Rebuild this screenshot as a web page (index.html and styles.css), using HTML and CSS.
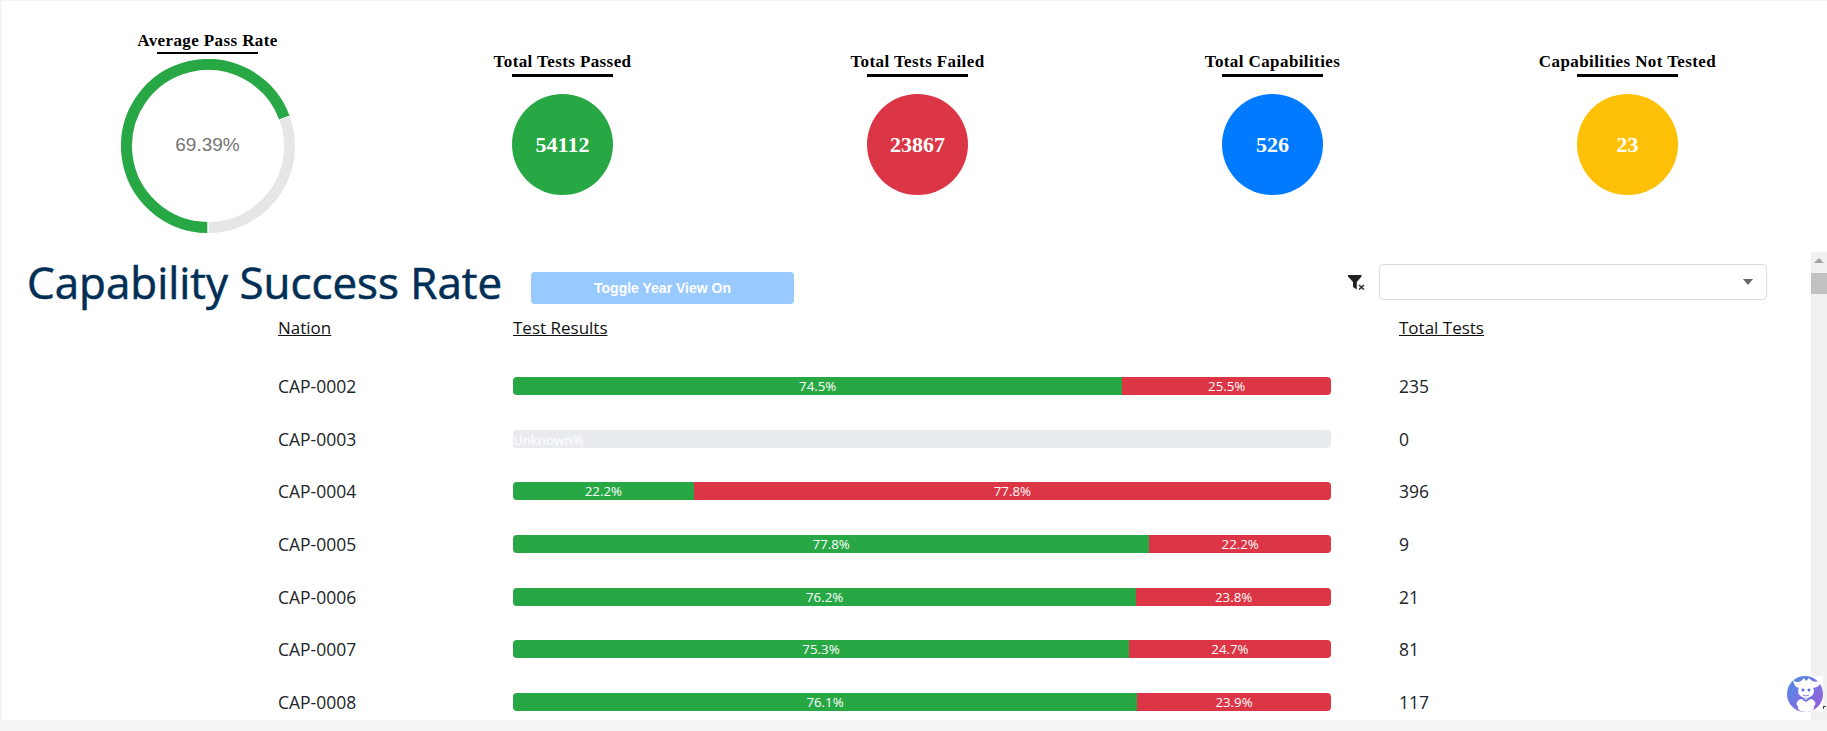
FILE: index.html
```html
<!DOCTYPE html>
<html>
<head>
    <meta charset="UTF-8">
    <title>Capability Success Rate</title>
    <link rel="stylesheet" href="styles.css">
</head>
<body>
    <div class="page">
        <section class="stats">
            <div class="stat stat-gauge">
                <h3 class="stat-title">Average Pass Rate</h3>
                <div class="stat-rule stat-rule-thin"></div>
                <div class="gauge">
                    <svg width="174" height="174" viewBox="0 0 174 174">
                        <circle cx="87" cy="87" r="81.5" fill="none" stroke="#e6e6e6" stroke-width="11"/>
                        <path d="M86.5 168.5A81.5 81.5 0 1 1 163.5 58.9" fill="none" stroke="#28a745" stroke-width="11"/>
                        <path d="M87 162V174M158.3 60.8L168.6 57" fill="none" stroke="#fff" stroke-width="1"/>
                    </svg>
                    <span class="gauge-value">69.39%</span>
                </div>
            </div>
            <div class="stat">
                <h3 class="stat-title">Total Tests Passed</h3>
                <div class="stat-rule"></div>
                <div class="stat-circle green">54112</div>
            </div>
            <div class="stat">
                <h3 class="stat-title">Total Tests Failed</h3>
                <div class="stat-rule"></div>
                <div class="stat-circle red">23867</div>
            </div>
            <div class="stat">
                <h3 class="stat-title">Total Capabilities</h3>
                <div class="stat-rule"></div>
                <div class="stat-circle blue">526</div>
            </div>
            <div class="stat">
                <h3 class="stat-title">Capabilities Not Tested</h3>
                <div class="stat-rule"></div>
                <div class="stat-circle yellow">23</div>
            </div>
        </section>

        <section class="panel">
            <div class="panel-main">
                <div class="toolbar">
                    <h1 class="panel-title">Capability Success Rate</h1>
                    <button class="toggle" disabled>Toggle Year View On</button>
                    <svg class="filter-icon" width="17" height="15" viewBox="0 0 17 15">
                        <path d="M0 0H13.5V1.5L8.8 7V14.5L5 12V7L0 1.5Z" fill="#222"/>
                        <path d="M11 10L16 14.5M16 10L11 14.5" stroke="#333" stroke-width="1.6" fill="none"/>
                    </svg>
                    <div class="select"><span class="select-caret"></span></div>
                </div>

                <div class="table">
                    <div class="head">Nation</div>
                    <div class="head">Test Results</div>
                    <div class="head total">Total Tests</div>

                    <div class="cell">CAP-0002</div>
                    <div class="cell"><div class="bar"><div class="bar-pass" style="width:74.5%">74.5%</div><div class="bar-fail" style="width:25.5%">25.5%</div></div></div>
                    <div class="cell total">235</div>

                    <div class="cell">CAP-0003</div>
                    <div class="cell"><div class="bar"><span class="bar-unknown">Unknown%</span></div></div>
                    <div class="cell total">0</div>

                    <div class="cell">CAP-0004</div>
                    <div class="cell"><div class="bar"><div class="bar-pass" style="width:22.1%">22.2%</div><div class="bar-fail" style="width:77.9%">77.8%</div></div></div>
                    <div class="cell total">396</div>

                    <div class="cell">CAP-0005</div>
                    <div class="cell"><div class="bar"><div class="bar-pass" style="width:77.8%">77.8%</div><div class="bar-fail" style="width:22.2%">22.2%</div></div></div>
                    <div class="cell total">9</div>

                    <div class="cell">CAP-0006</div>
                    <div class="cell"><div class="bar"><div class="bar-pass" style="width:76.2%">76.2%</div><div class="bar-fail" style="width:23.8%">23.8%</div></div></div>
                    <div class="cell total">21</div>

                    <div class="cell">CAP-0007</div>
                    <div class="cell"><div class="bar"><div class="bar-pass" style="width:75.3%">75.3%</div><div class="bar-fail" style="width:24.7%">24.7%</div></div></div>
                    <div class="cell total">81</div>

                    <div class="cell">CAP-0008</div>
                    <div class="cell"><div class="bar"><div class="bar-pass" style="width:76.3%">76.1%</div><div class="bar-fail" style="width:23.7%">23.9%</div></div></div>
                    <div class="cell total">117</div>
                </div>
            </div>
            <div class="scrollbar">
                <span class="scroll-arrow"></span>
                <span class="scroll-thumb"></span>
            </div>
        </section>
    </div>

    <svg class="helper" width="40" height="36" viewBox="0 0 40 36">
        <defs>
            <linearGradient id="helperFill" x1="0" y1="0" x2="1" y2="1">
                <stop offset="0" stop-color="#4a90e6"/>
                <stop offset="1" stop-color="#a058dc"/>
            </linearGradient>
        </defs>
        <rect width="36" height="36" fill="#fff"/>
        <circle cx="18" cy="18" r="18" fill="url(#helperFill)"/>
        <path d="M6 4C9 7 12 6 14 5L17 2L19 5L22 2L25 5C28 6 31 6 34 4C34 9 30 12 25 12H13C9 12 7 9 6 4Z" fill="#fff"/>
        <ellipse cx="19" cy="15" rx="8" ry="7" fill="#fff"/>
        <path d="M12 24C14 22 24 22 26 24C29 26 29 29 27 30C28 33 25 36 19 36C13 36 10 33 11 30C9 29 9 26 12 24Z" fill="#fff"/>
        <path d="M13 20L19 24L25 20L25 22L19 26L13 22Z" fill="#6a6fe0"/>
        <circle cx="16" cy="14" r="1.5" fill="#5a70d8"/>
        <circle cx="22" cy="14" r="1.5" fill="#5a70d8"/>
        <path d="M16 19Q19 21 22 19" stroke="#8a80e0" stroke-width="1" fill="none"/>
        <path d="M36 30H39V31H37V33H36Z" fill="#444"/>
    </svg>
</body>
</html>
```

FILE: styles.css
```css
body {
    margin: 0;
    background-color: #f5f5f5;
    font-family: "Open Sans", sans-serif;
    color: #212529;
    overflow: hidden;
}

.page {
    margin: 1px 0 11px 2px;
    height: 719px;
    background-color: #fff;
    overflow: hidden;
}

/* top row of stats */
.stats {
    display: grid;
    grid-template-columns: repeat(5, 355px);
    padding: 30px 0 0 28px;
    height: 221px;
}

.stat {
    display: flex;
    flex-direction: column;
    align-items: center;
    margin-top: 21px;
}

.stat-gauge {
    margin-top: 0;
}

.stat-title {
    margin: 0;
    font-family: "Liberation Serif", serif;
    font-size: 17px;
    line-height: 20px;
    font-weight: bold;
    color: #000;
    letter-spacing: 0.4px;
}

.stat-rule {
    width: 101px;
    height: 3px;
    margin-top: 2px;
    margin-bottom: 17px;
    background-color: #000;
}

.stat-rule-thin {
    height: 2px;
    margin-top: 1px;
    margin-bottom: 5px;
}

.stat-circle {
    display: flex;
    align-items: center;
    justify-content: center;
    width: 101px;
    height: 101px;
    border-radius: 50%;
    color: #fff;
    font-family: "Liberation Serif", serif;
    font-size: 22px;
    font-weight: bold;
}

.green { background-color: #28a745; }
.red { background-color: #dc3545; }
.blue { background-color: #007bff; }
.yellow { background-color: #ffc107; }

.gauge {
    position: relative;
    width: 174px;
    height: 174px;
}

.gauge svg {
    display: block;
}

.gauge-value {
    position: absolute;
    inset: 0 0 2px;
    display: flex;
    align-items: center;
    justify-content: center;
    font-family: "Liberation Sans", sans-serif;
    font-size: 19px;
    color: #757575;
}

/* lower scrolling part */
.panel {
    display: flex;
    height: 468px;
}

.panel-main {
    flex: 1;
    min-width: 0;
}

.toolbar {
    display: flex;
    align-items: center;
    height: 60px;
    padding: 0 44px 0 25px;
}

.panel-title {
    width: 476px;
    margin: 0;
    font-size: 43.9px;
    font-weight: 400;
    -webkit-text-stroke: 0.6px #002f56;
    line-height: 60px;
    color: #002f56;
    white-space: nowrap;
}

.toggle {
    width: 263px;
    height: 32px;
    margin: 12px 0 0 28px;
    border: 0;
    border-radius: 4px;
    background-color: #99caff;
    color: #fff;
    font-family: "Liberation Sans", sans-serif;
    font-size: 14px;
    font-weight: bold;
}

.filter-icon {
    margin-left: auto;
    margin-right: 14px;
}

.select {
    position: relative;
    width: 386px;
    height: 34px;
    border: 1px solid #ddd;
    border-radius: 4px;
}

.select-caret {
    position: absolute;
    top: 14px;
    right: 13px;
    border-left: 5px solid transparent;
    border-right: 5px solid transparent;
    border-top: 6px solid #666;
}

.table {
    display: grid;
    grid-template-columns: 235px 818px 1fr;
    grid-template-rows: 44px;
    grid-auto-rows: 52.6px;
    margin: 4px 0 0 276px;
}

.head {
    font-size: 17px;
    text-decoration: underline;
    color: #111;
}

.cell {
    display: flex;
    align-items: center;
    font-size: 17.5px;
    color: #212529;
}

.total {
    padding-left: 68px;
}

.bar {
    display: flex;
    width: 100%;
    height: 18px;
    border-radius: 4px;
    overflow: hidden;
    background-color: #e9ecef;
    color: #fff;
    font-size: 13.3px;
    line-height: 18px;
    text-align: center;
}

.bar-pass {
    background-color: #28a745;
}

.bar-fail {
    background-color: #dc3545;
}

.bar-unknown {
    line-height: 20px;
}

.scrollbar {
    display: flex;
    flex-direction: column;
    align-items: center;
    flex: none;
    width: 16px;
    background-color: #f1f1f1;
}

.scroll-arrow {
    margin-top: 6px;
    border-left: 5px solid transparent;
    border-right: 5px solid transparent;
    border-bottom: 5px solid #a3a3a3;
}

.scroll-thumb {
    width: 16px;
    height: 21px;
    margin-top: 10px;
    background-color: #c1c1c1;
}

/* chat helper in the corner */
.helper {
    position: absolute;
    left: 1787px;
    top: 676px;
}
```
